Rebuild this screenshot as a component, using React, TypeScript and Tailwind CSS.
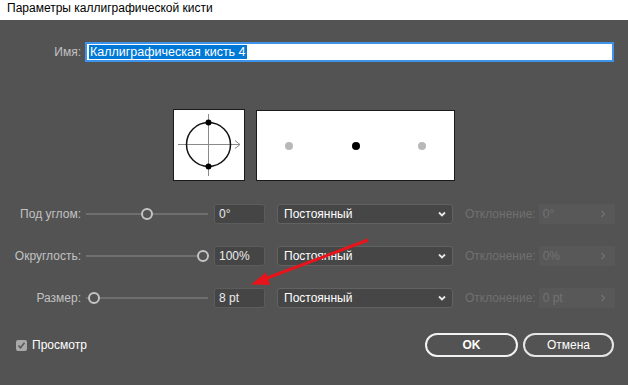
import React from "react";

const font = { fontFamily: '"Liberation Sans", Arial, sans-serif' };

function Slider({ pos }: { pos: number }) {
  const left = 8 + pos * 109;
  return (
    <div className="relative w-[122px] h-[20px] ml-[5px]">
      <div className="absolute left-0 right-0 top-[9px] h-[2px] bg-[#6f6f6f]" />
      <div
        className="absolute top-[4px] w-[12px] h-[12px] rounded-full border-2 border-[#c4c4c4] bg-[#535353]"
        style={{ left: left - 6 }}
      />
    </div>
  );
}

function Chevron() {
  return (
    <svg width="10" height="8" viewBox="0 0 10 8" className="ml-auto mr-[5px]">
      <polyline points="2,2.5 5,5.5 8,2.5" fill="none" stroke="#e6e6e6" strokeWidth="1.8" />
    </svg>
  );
}

function Row({
  label,
  pos,
  value,
  dev,
}: {
  label: string;
  pos: number;
  value: string;
  dev: string;
}) {
  return (
    <div className="flex items-center h-[20px]">
      <div className="w-[81px] text-right text-[12px] text-[#c2c2c2]">{label}</div>
      <Slider pos={pos} />
      <div className="ml-[6px] w-[51px] h-[20px] rounded-[3px] bg-[#454545] border border-[#5c5c5c] text-[12px] text-[#ececec] pl-[4px] leading-[18px]">
        {value}
      </div>
      <div className="ml-[12px] w-[176px] h-[20px] rounded-[3px] bg-[#464646] border border-[#626262] text-[12px] text-white pl-[6px] leading-[18px] flex items-center">
        <span>Постоянный</span>
        <Chevron />
      </div>
      <div className="ml-[12px] text-[12px] text-[#707070]">Отклонение:</div>
      <div className="ml-[3px] w-[76px] h-[20px] bg-[#585858] text-[12px] text-[#727272] pl-[4px] leading-[20px] flex items-center">
        <span>{dev}</span>
        <svg width="8" height="10" viewBox="0 0 8 10" className="ml-auto mr-[8px]">
          <polyline points="2.5,2 5.5,5 2.5,8" fill="none" stroke="#707070" strokeWidth="1.4" />
        </svg>
      </div>
    </div>
  );
}

export default function App() {
  return (
    <div className="relative w-[628px] h-[385px] bg-[#535353] overflow-hidden" style={font}>
      <div className="h-[20px] bg-white text-[12px] text-black pl-[7px] leading-[16px]">
        Параметры каллиграфической кисти
      </div>

      <div className="flex items-center mt-[22px] h-[20px]">
        <div className="w-[81px] text-right text-[12px] text-[#c2c2c2]">Имя:</div>
        <div className="ml-[4px] w-[529px] h-[20px] bg-white border-2 border-[#3d92ea] flex items-center pl-[2px]">
          <span className="bg-[#0078d7] text-white text-[12.5px] leading-[14px] px-[1px]">
            Каллиграфическая кисть 4
          </span>
        </div>
      </div>

      <div className="flex mt-[47px] ml-[173px] gap-[11px]">
        <div className="w-[72px] h-[72px] bg-white border border-[#1a1a1a]">
          <svg width="70" height="70" viewBox="0 0 70 70">
            <line x1="4" y1="34.5" x2="66" y2="34.5" stroke="#8a8a8a" strokeWidth="1" />
            <polyline points="61,30.5 66,34.5 61,38.5" fill="none" stroke="#8a8a8a" strokeWidth="1" />
            <line x1="34.5" y1="4" x2="34.5" y2="66" stroke="#8a8a8a" strokeWidth="1" />
            <circle cx="34.5" cy="34.5" r="22" fill="none" stroke="#111" strokeWidth="1.5" />
            <circle cx="34.5" cy="12.5" r="3" fill="#000" />
            <circle cx="34.5" cy="56.5" r="3" fill="#000" />
          </svg>
        </div>
        <div className="w-[199px] h-[71px] mt-[1px] bg-white border border-[#1a1a1a] flex items-center justify-between px-[28px]">
          <div className="w-[8px] h-[8px] rounded-full bg-[#b8b8b8]" />
          <div className="w-[8px] h-[8px] rounded-full bg-black" />
          <div className="w-[8px] h-[8px] rounded-full bg-[#b8b8b8]" />
        </div>
      </div>

      <div className="flex flex-col mt-[23px] gap-[22px]">
        <Row label="Под углом:" pos={0.49} value="0°" dev="0°" />
        <Row label="Округлость:" pos={1} value="100%" dev="0%" />
        <Row label="Размер:" pos={0} value="8 pt" dev="0 pt" />
      </div>

      <div className="flex items-center mt-[25px] h-[24px]">
        <div className="ml-[16px] w-[11px] h-[11px] rounded-[2px] bg-[#a9a9a9] flex items-center justify-center">
          <svg width="9" height="9" viewBox="0 0 9 9">
            <polyline points="1.5,4.5 3.5,6.8 7.5,1.8" fill="none" stroke="#5a5a5a" strokeWidth="1.6" />
          </svg>
        </div>
        <span className="ml-[5px] text-[12px] text-white">Просмотр</span>
        <div className="ml-auto flex gap-[5px] mr-[14px]">
          <div className="w-[93px] h-[24px] rounded-full border-2 border-[#f2f2f2] text-white text-[12px] font-bold flex items-center justify-center">
            OK
          </div>
          <div className="w-[91px] h-[24px] rounded-full border-2 border-[#e6e6e6] text-white text-[12px] flex items-center justify-center">
            Отмена
          </div>
        </div>
      </div>

      <svg className="absolute left-0 top-0 pointer-events-none" width="628" height="385">
        <line x1="368" y1="240" x2="262" y2="280" stroke="#e8141b" strokeWidth="3" />
        <polygon points="251,284.5 266,272.5 270,285" fill="#e8141b" />
      </svg>
    </div>
  );
}
